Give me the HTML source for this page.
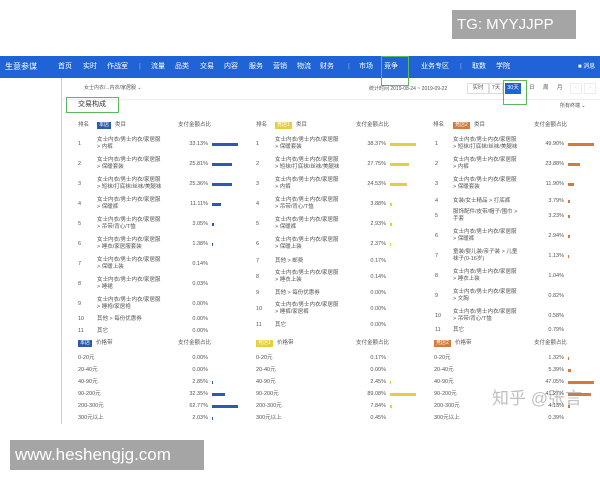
<!DOCTYPE html>
<html><head><meta charset="utf-8"><style>
*{margin:0;padding:0;box-sizing:border-box}
body{width:600px;height:480px;background:#fff;position:relative;overflow:hidden;font-family:"Liberation Sans","Noto Sans CJK SC",sans-serif;color:#555;font-size:5.5px;line-height:7px}
.a{position:absolute;white-space:nowrap}
.nav{position:absolute;left:0;top:56px;width:600px;height:22px;background:#1f63d6}
.nav span{position:absolute;top:7px;color:#fff;font-size:7px;line-height:8px}
.r{text-align:right;width:40px}
.b{position:absolute;height:3px}
.bl{background:#2a5bb0}.by{background:#e6cf3e}.bo{background:#d57a3a}
.bd{position:absolute;font-size:5px;color:#fff;padding:0 2px;line-height:7px}
</style></head><body>
<div class="a" style="left:452px;top:10px;width:124px;height:29px;background:#a5a5a5;color:#fff;font-size:15px;line-height:29px;padding-left:5px">TG: MYYJJPP</div>
<div class="nav">
<span style="left:5px;font-size:8px">生意参谋</span>
<span style="left:58px">首页</span><span style="left:83px">实时</span><span style="left:107px">作战室</span>
<span style="left:139px;opacity:.5">|</span>
<span style="left:151px">流量</span><span style="left:175px">品类</span><span style="left:200px">交易</span><span style="left:224px">内容</span><span style="left:249px">服务</span><span style="left:273px">营销</span><span style="left:297px">物流</span><span style="left:320px">财务</span>
<span style="left:348px;opacity:.5">|</span>
<span style="left:359px">市场</span><span style="left:384px">竞争</span><span style="left:421px">业务专区</span>
<span style="left:460px;opacity:.5">|</span>
<span style="left:472px">取数</span><span style="left:496px">学院</span><span style="left:578px;font-size:6px">■ 消息</span>
</div>
<div class="a" style="left:381px;top:56px;width:28px;height:30px;border:1px solid #5cb85c"></div>
<div class="a" style="left:61px;top:78px;width:1px;height:346px;background:#ccc"></div>
<div class="a" style="left:62px;top:78px;width:538px;height:22px;border-bottom:1px solid #eee"></div>
<div class="a" style="left:84px;top:85px;font-size:5px">女士内衣/...内衣/家居服 ⌄</div>
<div class="a" style="left:369px;top:86px;font-size:5px">统计时间 2019-08-24 ~ 2019-09-22</div>
<div class="a" style="left:467px;top:83px;width:22px;height:11px;border:1px solid #ddd;text-align:center;line-height:9px">实时</div>
<div class="a" style="left:489px;top:83px;width:14px;height:11px;border:1px solid #ddd;text-align:center;line-height:9px">7天</div>
<div class="a" style="left:505px;top:83px;width:16px;height:11px;background:#1f63d6;color:#fff;text-align:center;line-height:11px">30天</div>
<div class="a" style="left:529px;top:85px">日</div><div class="a" style="left:543px;top:85px">周</div><div class="a" style="left:557px;top:85px">月</div>
<div class="a" style="left:570px;top:83px;width:12px;height:11px;border:1px solid #eee;color:#ccc;text-align:center;line-height:9px">‹</div>
<div class="a" style="left:584px;top:83px;width:12px;height:11px;border:1px solid #eee;color:#ccc;text-align:center;line-height:9px">›</div>
<div class="a" style="left:503px;top:80px;width:24px;height:25px;border:1px solid #5cb85c"></div>
<div class="a" style="left:66px;top:97px;width:53px;height:16px;border:1px solid #5cb85c;color:#333;font-size:7px;line-height:14px;padding-left:11px">交易构成</div>
<div class="a" style="left:560px;top:103px;font-size:5px">所有终端 ⌄</div>

<div class="a" style="left:78px;top:122px">排名</div><div class="bd bl" style="left:97px;top:122px">本店</div><div class="a" style="left:115px;top:122px">类目</div><div class="a" style="left:178px;top:122px">支付金额占比</div>
<div class="a" style="left:256px;top:122px">排名</div><div class="bd by" style="left:275px;top:122px">竞店1</div><div class="a" style="left:296px;top:122px">类目</div><div class="a" style="left:356px;top:122px">支付金额占比</div>
<div class="a" style="left:433px;top:122px">排名</div><div class="bd bo" style="left:453px;top:122px">竞店2</div><div class="a" style="left:474px;top:122px">类目</div><div class="a" style="left:534px;top:122px">支付金额占比</div>

<div class="a" style="left:78px;top:141px">1</div><div class="a" style="left:97px;top:137px">女士内衣/男士内衣/家居服<br>&gt; 内裤</div><div class="a r" style="left:168px;top:141px">33.13%</div><div class="b bl" style="left:212px;top:143px;width:26px"></div>
<div class="a" style="left:78px;top:161px">2</div><div class="a" style="left:97px;top:157px">女士内衣/男士内衣/家居服<br>&gt; 保暖套装</div><div class="a r" style="left:168px;top:161px">25.81%</div><div class="b bl" style="left:212px;top:163px;width:20px"></div>
<div class="a" style="left:78px;top:181px">3</div><div class="a" style="left:97px;top:177px">女士内衣/男士内衣/家居服<br>&gt; 短袜/打底袜/丝袜/美腿袜</div><div class="a r" style="left:168px;top:181px">25.36%</div><div class="b bl" style="left:212px;top:183px;width:20px"></div>
<div class="a" style="left:78px;top:201px">4</div><div class="a" style="left:97px;top:197px">女士内衣/男士内衣/家居服<br>&gt; 保暖裤</div><div class="a r" style="left:168px;top:201px">11.11%</div><div class="b bl" style="left:212px;top:203px;width:9px"></div>
<div class="a" style="left:78px;top:221px">5</div><div class="a" style="left:97px;top:217px">女士内衣/男士内衣/家居服<br>&gt; 吊带/背心/T恤</div><div class="a r" style="left:168px;top:221px">3.05%</div><div class="b bl" style="left:212px;top:223px;width:2px"></div>
<div class="a" style="left:78px;top:241px">6</div><div class="a" style="left:97px;top:237px">女士内衣/男士内衣/家居服<br>&gt; 睡衣/家居服套装</div><div class="a r" style="left:168px;top:241px">1.38%</div><div class="b bl" style="left:212px;top:243px;width:1px"></div>
<div class="a" style="left:78px;top:261px">7</div><div class="a" style="left:97px;top:257px">女士内衣/男士内衣/家居服<br>&gt; 保暖上装</div><div class="a r" style="left:168px;top:261px">0.14%</div>
<div class="a" style="left:78px;top:281px">8</div><div class="a" style="left:97px;top:277px">女士内衣/男士内衣/家居服<br>&gt; 睡裙</div><div class="a r" style="left:168px;top:281px">0.03%</div>
<div class="a" style="left:78px;top:301px">9</div><div class="a" style="left:97px;top:297px">女士内衣/男士内衣/家居服<br>&gt; 睡袍/家居袍</div><div class="a r" style="left:168px;top:301px">0.00%</div>
<div class="a" style="left:78px;top:316px">10</div><div class="a" style="left:97px;top:316px">其他 &gt; 每份优惠券</div><div class="a r" style="left:168px;top:316px">0.00%</div>
<div class="a" style="left:78px;top:328px">11</div><div class="a" style="left:97px;top:328px">其它</div><div class="a r" style="left:168px;top:328px">0.00%</div>

<div class="a" style="left:256px;top:141px">1</div><div class="a" style="left:275px;top:137px">女士内衣/男士内衣/家居服<br>&gt; 保暖套装</div><div class="a r" style="left:346px;top:141px">38.37%</div><div class="b by" style="left:390px;top:143px;width:26px"></div>
<div class="a" style="left:256px;top:161px">2</div><div class="a" style="left:275px;top:157px">女士内衣/男士内衣/家居服<br>&gt; 短袜/打底袜/丝袜/美腿袜</div><div class="a r" style="left:346px;top:161px">27.75%</div><div class="b by" style="left:390px;top:163px;width:19px"></div>
<div class="a" style="left:256px;top:181px">3</div><div class="a" style="left:275px;top:177px">女士内衣/男士内衣/家居服<br>&gt; 内裤</div><div class="a r" style="left:346px;top:181px">24.53%</div><div class="b by" style="left:390px;top:183px;width:17px"></div>
<div class="a" style="left:256px;top:201px">4</div><div class="a" style="left:275px;top:197px">女士内衣/男士内衣/家居服<br>&gt; 吊带/背心/T恤</div><div class="a r" style="left:346px;top:201px">3.88%</div><div class="b by" style="left:390px;top:203px;width:2px"></div>
<div class="a" style="left:256px;top:221px">5</div><div class="a" style="left:275px;top:217px">女士内衣/男士内衣/家居服<br>&gt; 保暖裤</div><div class="a r" style="left:346px;top:221px">2.93%</div><div class="b by" style="left:390px;top:223px;width:2px"></div>
<div class="a" style="left:256px;top:241px">6</div><div class="a" style="left:275px;top:237px">女士内衣/男士内衣/家居服<br>&gt; 保暖上装</div><div class="a r" style="left:346px;top:241px">2.37%</div><div class="b by" style="left:390px;top:243px;width:1px"></div>
<div class="a" style="left:256px;top:258px">7</div><div class="a" style="left:275px;top:258px">其他 &gt; 邮费</div><div class="a r" style="left:346px;top:258px">0.17%</div>
<div class="a" style="left:256px;top:274px">8</div><div class="a" style="left:275px;top:270px">女士内衣/男士内衣/家居服<br>&gt; 睡衣上装</div><div class="a r" style="left:346px;top:274px">0.14%</div>
<div class="a" style="left:256px;top:290px">9</div><div class="a" style="left:275px;top:290px">其他 &gt; 每份优惠券</div><div class="a r" style="left:346px;top:290px">0.00%</div>
<div class="a" style="left:256px;top:306px">10</div><div class="a" style="left:275px;top:302px">女士内衣/男士内衣/家居服<br>&gt; 睡裤/家居裤</div><div class="a r" style="left:346px;top:306px">0.00%</div>
<div class="a" style="left:256px;top:322px">11</div><div class="a" style="left:275px;top:322px">其它</div><div class="a r" style="left:346px;top:322px">0.00%</div>

<div class="a" style="left:435px;top:141px">1</div><div class="a" style="left:453px;top:137px">女士内衣/男士内衣/家居服<br>&gt; 短袜/打底袜/丝袜/美腿袜</div><div class="a r" style="left:524px;top:141px">49.90%</div><div class="b bo" style="left:568px;top:143px;width:26px"></div>
<div class="a" style="left:435px;top:161px">2</div><div class="a" style="left:453px;top:157px">女士内衣/男士内衣/家居服<br>&gt; 内裤</div><div class="a r" style="left:524px;top:161px">23.88%</div><div class="b bo" style="left:568px;top:163px;width:12px"></div>
<div class="a" style="left:435px;top:181px">3</div><div class="a" style="left:453px;top:177px">女士内衣/男士内衣/家居服<br>&gt; 保暖套装</div><div class="a r" style="left:524px;top:181px">11.90%</div><div class="b bo" style="left:568px;top:183px;width:6px"></div>
<div class="a" style="left:435px;top:198px">4</div><div class="a" style="left:453px;top:198px">女装/女士精品 &gt; 打底裤</div><div class="a r" style="left:524px;top:198px">3.79%</div><div class="b bo" style="left:568px;top:200px;width:2px"></div>
<div class="a" style="left:435px;top:213px">5</div><div class="a" style="left:453px;top:209px">服饰配件/皮带/帽子/围巾 &gt;<br>手套</div><div class="a r" style="left:524px;top:213px">3.23%</div><div class="b bo" style="left:568px;top:215px;width:2px"></div>
<div class="a" style="left:435px;top:233px">6</div><div class="a" style="left:453px;top:229px">女士内衣/男士内衣/家居服<br>&gt; 保暖裤</div><div class="a r" style="left:524px;top:233px">2.94%</div><div class="b bo" style="left:568px;top:235px;width:2px"></div>
<div class="a" style="left:435px;top:253px">7</div><div class="a" style="left:453px;top:249px">童装/婴儿装/亲子装 &gt; 儿童<br>袜子(0-16岁)</div><div class="a r" style="left:524px;top:253px">1.13%</div><div class="b bo" style="left:568px;top:255px;width:1px"></div>
<div class="a" style="left:435px;top:273px">8</div><div class="a" style="left:453px;top:269px">女士内衣/男士内衣/家居服<br>&gt; 睡衣上装</div><div class="a r" style="left:524px;top:273px">1.04%</div>
<div class="a" style="left:435px;top:293px">9</div><div class="a" style="left:453px;top:289px">女士内衣/男士内衣/家居服<br>&gt; 文胸</div><div class="a r" style="left:524px;top:293px">0.82%</div>
<div class="a" style="left:435px;top:313px">10</div><div class="a" style="left:453px;top:309px">女士内衣/男士内衣/家居服<br>&gt; 吊带/背心/T恤</div><div class="a r" style="left:524px;top:313px">0.58%</div>
<div class="a" style="left:435px;top:327px">11</div><div class="a" style="left:453px;top:327px">其它</div><div class="a r" style="left:524px;top:327px">0.79%</div>

<div class="bd bl" style="left:78px;top:340px">本店</div><div class="a" style="left:96px;top:340px">价格带</div><div class="a" style="left:178px;top:340px">支付金额占比</div>
<div class="bd by" style="left:256px;top:340px">竞店1</div><div class="a" style="left:277px;top:340px">价格带</div><div class="a" style="left:356px;top:340px">支付金额占比</div>
<div class="bd bo" style="left:434px;top:340px">竞店2</div><div class="a" style="left:455px;top:340px">价格带</div><div class="a" style="left:534px;top:340px">支付金额占比</div>

<div class="a" style="left:78px;top:355px">0-20元</div><div class="a r" style="left:168px;top:355px">0.00%</div>
<div class="a" style="left:78px;top:367px">20-40元</div><div class="a r" style="left:168px;top:367px">0.00%</div>
<div class="a" style="left:78px;top:379px">40-90元</div><div class="a r" style="left:168px;top:379px">2.85%</div><div class="b bl" style="left:212px;top:381px;width:1px"></div>
<div class="a" style="left:78px;top:391px">90-200元</div><div class="a r" style="left:168px;top:391px">32.35%</div><div class="b bl" style="left:212px;top:393px;width:13px"></div>
<div class="a" style="left:78px;top:403px">200-300元</div><div class="a r" style="left:168px;top:403px">62.77%</div><div class="b bl" style="left:212px;top:405px;width:26px"></div>
<div class="a" style="left:78px;top:415px">300元以上</div><div class="a r" style="left:168px;top:415px">2.03%</div><div class="b bl" style="left:212px;top:417px;width:1px"></div>

<div class="a" style="left:256px;top:355px">0-20元</div><div class="a r" style="left:346px;top:355px">0.17%</div>
<div class="a" style="left:256px;top:367px">20-40元</div><div class="a r" style="left:346px;top:367px">0.00%</div>
<div class="a" style="left:256px;top:379px">40-90元</div><div class="a r" style="left:346px;top:379px">2.45%</div><div class="b by" style="left:390px;top:381px;width:1px"></div>
<div class="a" style="left:256px;top:391px">90-200元</div><div class="a r" style="left:346px;top:391px">89.08%</div><div class="b by" style="left:390px;top:393px;width:26px"></div>
<div class="a" style="left:256px;top:403px">200-300元</div><div class="a r" style="left:346px;top:403px">7.84%</div><div class="b by" style="left:390px;top:405px;width:2px"></div>
<div class="a" style="left:256px;top:415px">300元以上</div><div class="a r" style="left:346px;top:415px">0.45%</div>

<div class="a" style="left:434px;top:355px">0-20元</div><div class="a r" style="left:524px;top:355px">1.32%</div><div class="b bo" style="left:568px;top:357px;width:1px"></div>
<div class="a" style="left:434px;top:367px">20-40元</div><div class="a r" style="left:524px;top:367px">5.39%</div><div class="b bo" style="left:568px;top:369px;width:3px"></div>
<div class="a" style="left:434px;top:379px">40-90元</div><div class="a r" style="left:524px;top:379px">47.05%</div><div class="b bo" style="left:568px;top:381px;width:26px"></div>
<div class="a" style="left:434px;top:391px">90-200元</div><div class="a r" style="left:524px;top:391px">41.27%</div><div class="b bo" style="left:568px;top:393px;width:23px"></div>
<div class="a" style="left:434px;top:403px">200-300元</div><div class="a r" style="left:524px;top:403px">4.13%</div><div class="b bo" style="left:568px;top:405px;width:2px"></div>
<div class="a" style="left:434px;top:415px">300元以上</div><div class="a r" style="left:524px;top:415px">0.39%</div>

<div class="a" style="left:492px;top:389px;font-size:17px;line-height:20px;color:rgba(140,140,140,.55)">知乎 @张言</div>
<div class="a" style="left:10px;top:440px;width:194px;height:30px;background:#a5a5a5;color:#fff;font-size:17px;line-height:30px;padding-left:5px">www.heshengjg.com</div>
</body></html>
